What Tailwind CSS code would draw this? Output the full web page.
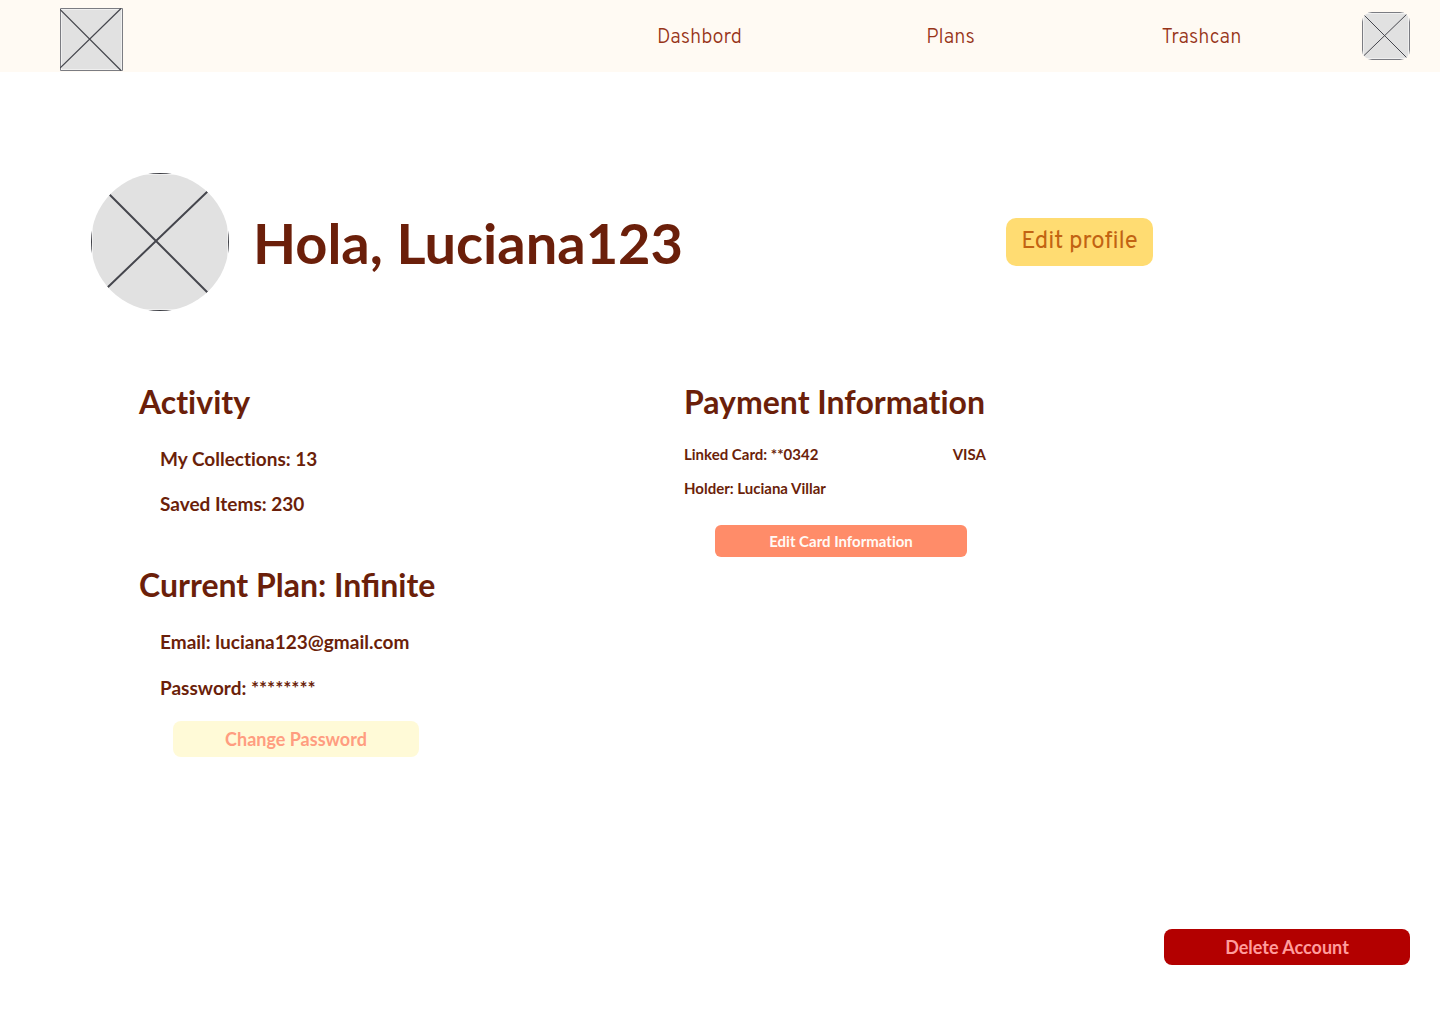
<!DOCTYPE html>
<html lang="en">
<head>
<meta charset="utf-8">
<meta name="viewport" content="width=device-width, initial-scale=1">
<title>Profile</title>
<script src="https://cdn.jsdelivr.net/npm/@tailwindcss/browser@4"></script>
</head>
<body class="flex min-h-screen flex-col bg-white font-['Lato',sans-serif] font-bold text-[#6b1f0a] [font-variant-ligatures:no-common-ligatures]">
<header class="flex h-[72px] items-center bg-[#fffaf3] pr-[30px] pl-[60px]">
  <a href="#" aria-label="Home" class="mt-[7px] shrink-0">
    <svg class="block size-[63px]" viewBox="0 0 63 63" fill="none">
      <path d="M0 0h63v63H0z" fill="#fff"/>
      <path d="M1.500 1.500h60v60h-60z" fill="#e1e1e1"/>
      <path d="M.5.5h62v62H.5z" stroke="#7b7c82"/>
      <path d="M0 1.500 61 62.500M61 .5 0 60" stroke="#45464d" stroke-width="1.200"/>
    </svg>
  </a>
  <nav class="mr-[35px] ml-auto grid w-[753px] grid-cols-3 pt-1 text-center font-['Overpass','Open_Sans',sans-serif] text-[20px] leading-6 font-light text-[#973418]">
    <a href="#">Dashbord</a>
    <a href="#">Plans</a>
    <a href="#">Trashcan</a>
  </nav>
  <a href="#" aria-label="Account" class="shrink-0">
    <svg class="block size-12 rounded-[10px]" viewBox="0 0 48 48" fill="none">
      <path d="M0 0h48v48H0z" fill="#fff"/>
      <path d="M1.500 1.500h45v45h-45z" fill="#e1e1e1"/>
      <path d="M.5.5h47v47H.5z" stroke="#7b7c82"/>
      <path d="M0 1 46.500 47.500M46.500 .5 0 45.500" stroke="#45464d"/>
    </svg>
  </a>
</header>

<main class="flex grow flex-col pt-[101px] pb-[59px]">
  <section class="flex items-center pl-[91px]">
    <svg class="block size-[138px] shrink-0 rounded-full" viewBox="0 0 138 138" fill="none" role="img" aria-label="Profile picture">
      <path d="M0 0h138v138H0z" fill="#fff"/>
      <path d="M1.500 1.500h135v135h-135z" fill="#e1e1e1"/>
      <path d="M.5.5h137v137H.5z" stroke="#3d3e44"/>
      <path d="M18.500 21.500 116.500 119.500M116.500 18.500 16.500 114.500" stroke="#45464d" stroke-width="2"/>
    </svg>
    <h1 class="ml-6 w-[753px] pt-[2px] text-[56px] leading-[72px]">Hola, Luciana123</h1>
    <button type="button" class="flex h-12 w-[147px] items-center justify-center rounded-[10px] bg-[#ffdc72] font-['Overpass','Open_Sans',sans-serif] text-[24px] font-normal text-[#c26312]">Edit profile</button>
  </section>

  <div class="mt-[71px] grid grid-cols-[545px_1fr] pl-[139px]">
    <div class="flex flex-col gap-[49px]">
      <section>
        <h2 class="text-[32px] leading-10">Activity</h2>
        <ul class="mt-[25px] flex flex-col gap-[21px] pl-[21px] text-[19px] leading-6">
          <li>My Collections: 13</li>
          <li>Saved Items: 230</li>
        </ul>
      </section>
      <section>
        <h2 class="text-[32px] leading-10 [font-variant-ligatures:normal]">Current Plan: Infinite</h2>
        <ul class="mt-[25px] flex flex-col gap-[22px] pl-[21px] text-[19px] leading-6">
          <li>Email: luciana123@gmail.com</li>
          <li>Password: ********</li>
        </ul>
        <button type="button" class="mt-[21px] ml-[34px] block h-9 w-[246px] rounded-lg bg-[#fffad7] text-[18px] text-[#ff9d80]">Change Password</button>
      </section>
    </div>
    <section>
      <h2 class="text-[32px] leading-10">Payment Information</h2>
      <div class="mt-5 flex w-[302px] justify-between text-[15px] leading-6">
        <p>Linked Card: **0342</p>
        <p>VISA</p>
      </div>
      <p class="mt-[10px] text-[15px] leading-6">Holder: Luciana Villar</p>
      <button type="button" class="mt-[25px] ml-[31px] block h-8 w-[252px] rounded-md bg-[#ff8c69] text-[15px] text-[#fffaf5]">Edit Card Information</button>
    </section>
  </div>

  <button type="button" class="mt-auto mr-[30px] ml-auto h-9 w-[246px] rounded-lg bg-[#b30000] text-[18px] text-[#ff9c9c]">Delete Account</button>
</main>
</body>
</html>
